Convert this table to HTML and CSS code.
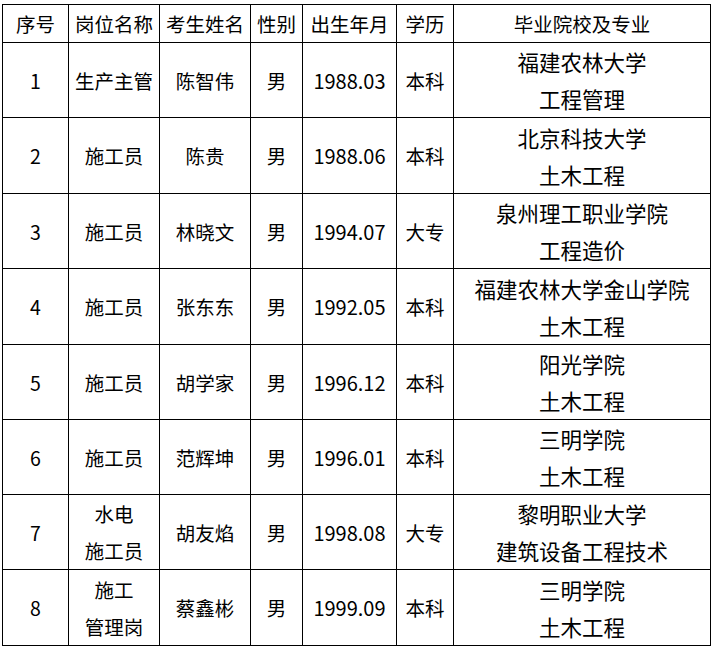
FILE: index.html
```html
<!DOCTYPE html>
<html lang="zh">
<head>
<meta charset="utf-8">
<link rel="stylesheet" href="styles.css">
</head>
<body>
<table class="roster">
  <colgroup>
    <col class="c-no"><col class="c-post"><col class="c-name"><col class="c-sex"><col class="c-birth"><col class="c-edu"><col class="c-school">
  </colgroup>
  <thead>
    <tr class="head"><th>序号</th><th>岗位名称</th><th>考生姓名</th><th>性别</th><th>出生年月</th><th>学历</th><th>毕业院校及专业</th></tr>
  </thead>
  <tbody>
    <tr class="r75"><td>1</td><td>生产主管</td><td>陈智伟</td><td>男</td><td class="birth">1988.03</td><td>本科</td><td class="school">福建农林大学<br>工程管理</td></tr>
    <tr class="r76"><td>2</td><td>施工员</td><td>陈贵</td><td>男</td><td class="birth">1988.06</td><td>本科</td><td class="school">北京科技大学<br>土木工程</td></tr>
    <tr class="r75"><td>3</td><td>施工员</td><td>林晓文</td><td>男</td><td class="birth">1994.07</td><td>大专</td><td class="school">泉州理工职业学院<br>工程造价</td></tr>
    <tr class="r76"><td>4</td><td>施工员</td><td>张东东</td><td>男</td><td class="birth">1992.05</td><td>本科</td><td class="school">福建农林大学金山学院<br>土木工程</td></tr>
    <tr class="r75"><td>5</td><td>施工员</td><td>胡学家</td><td>男</td><td class="birth">1996.12</td><td>本科</td><td class="school">阳光学院<br>土木工程</td></tr>
    <tr class="r75"><td>6</td><td>施工员</td><td>范辉坤</td><td>男</td><td class="birth">1996.01</td><td>本科</td><td class="school">三明学院<br>土木工程</td></tr>
    <tr class="r75"><td>7</td><td>水电<br>施工员</td><td>胡友焰</td><td>男</td><td class="birth">1998.08</td><td>大专</td><td class="school">黎明职业大学<br>建筑设备工程技术</td></tr>
    <tr class="r76"><td>8</td><td>施工<br>管理岗</td><td>蔡鑫彬</td><td>男</td><td class="birth">1999.09</td><td>本科</td><td class="school">三明学院<br>土木工程</td></tr>
  </tbody>
</table>
</body>
</html>
```
FILE: styles.css
```css
html, body {
  margin: 0;
  padding: 0;
  background: #ffffff;
}
body {
  padding: 4px 0 0 2px;
  font-family: "Noto Sans CJK SC", "Noto Sans", sans-serif;
  color: #000;
}
.roster {
  border-collapse: collapse;
  table-layout: fixed;
  width: 709px;
}
.c-no { width: 66px; }
.c-post { width: 91px; }
.c-name { width: 91px; }
.c-sex { width: 52px; }
.c-birth { width: 94px; }
.c-edu { width: 57px; }
.c-school { width: 257px; }
.roster th,
.roster td {
  border: 1px solid #000;
  padding: 0;
  text-align: center;
  vertical-align: middle;
  font-size: 19.5px;
  font-weight: normal;
  line-height: 37px;
  white-space: nowrap;
}
.roster td.birth {
  font-size: 20px;
}
.roster td.school {
  font-size: 21.5px;
}
.head { height: 38px; }
.r75 { height: 75px; }
.r76 { height: 76px; }
```
